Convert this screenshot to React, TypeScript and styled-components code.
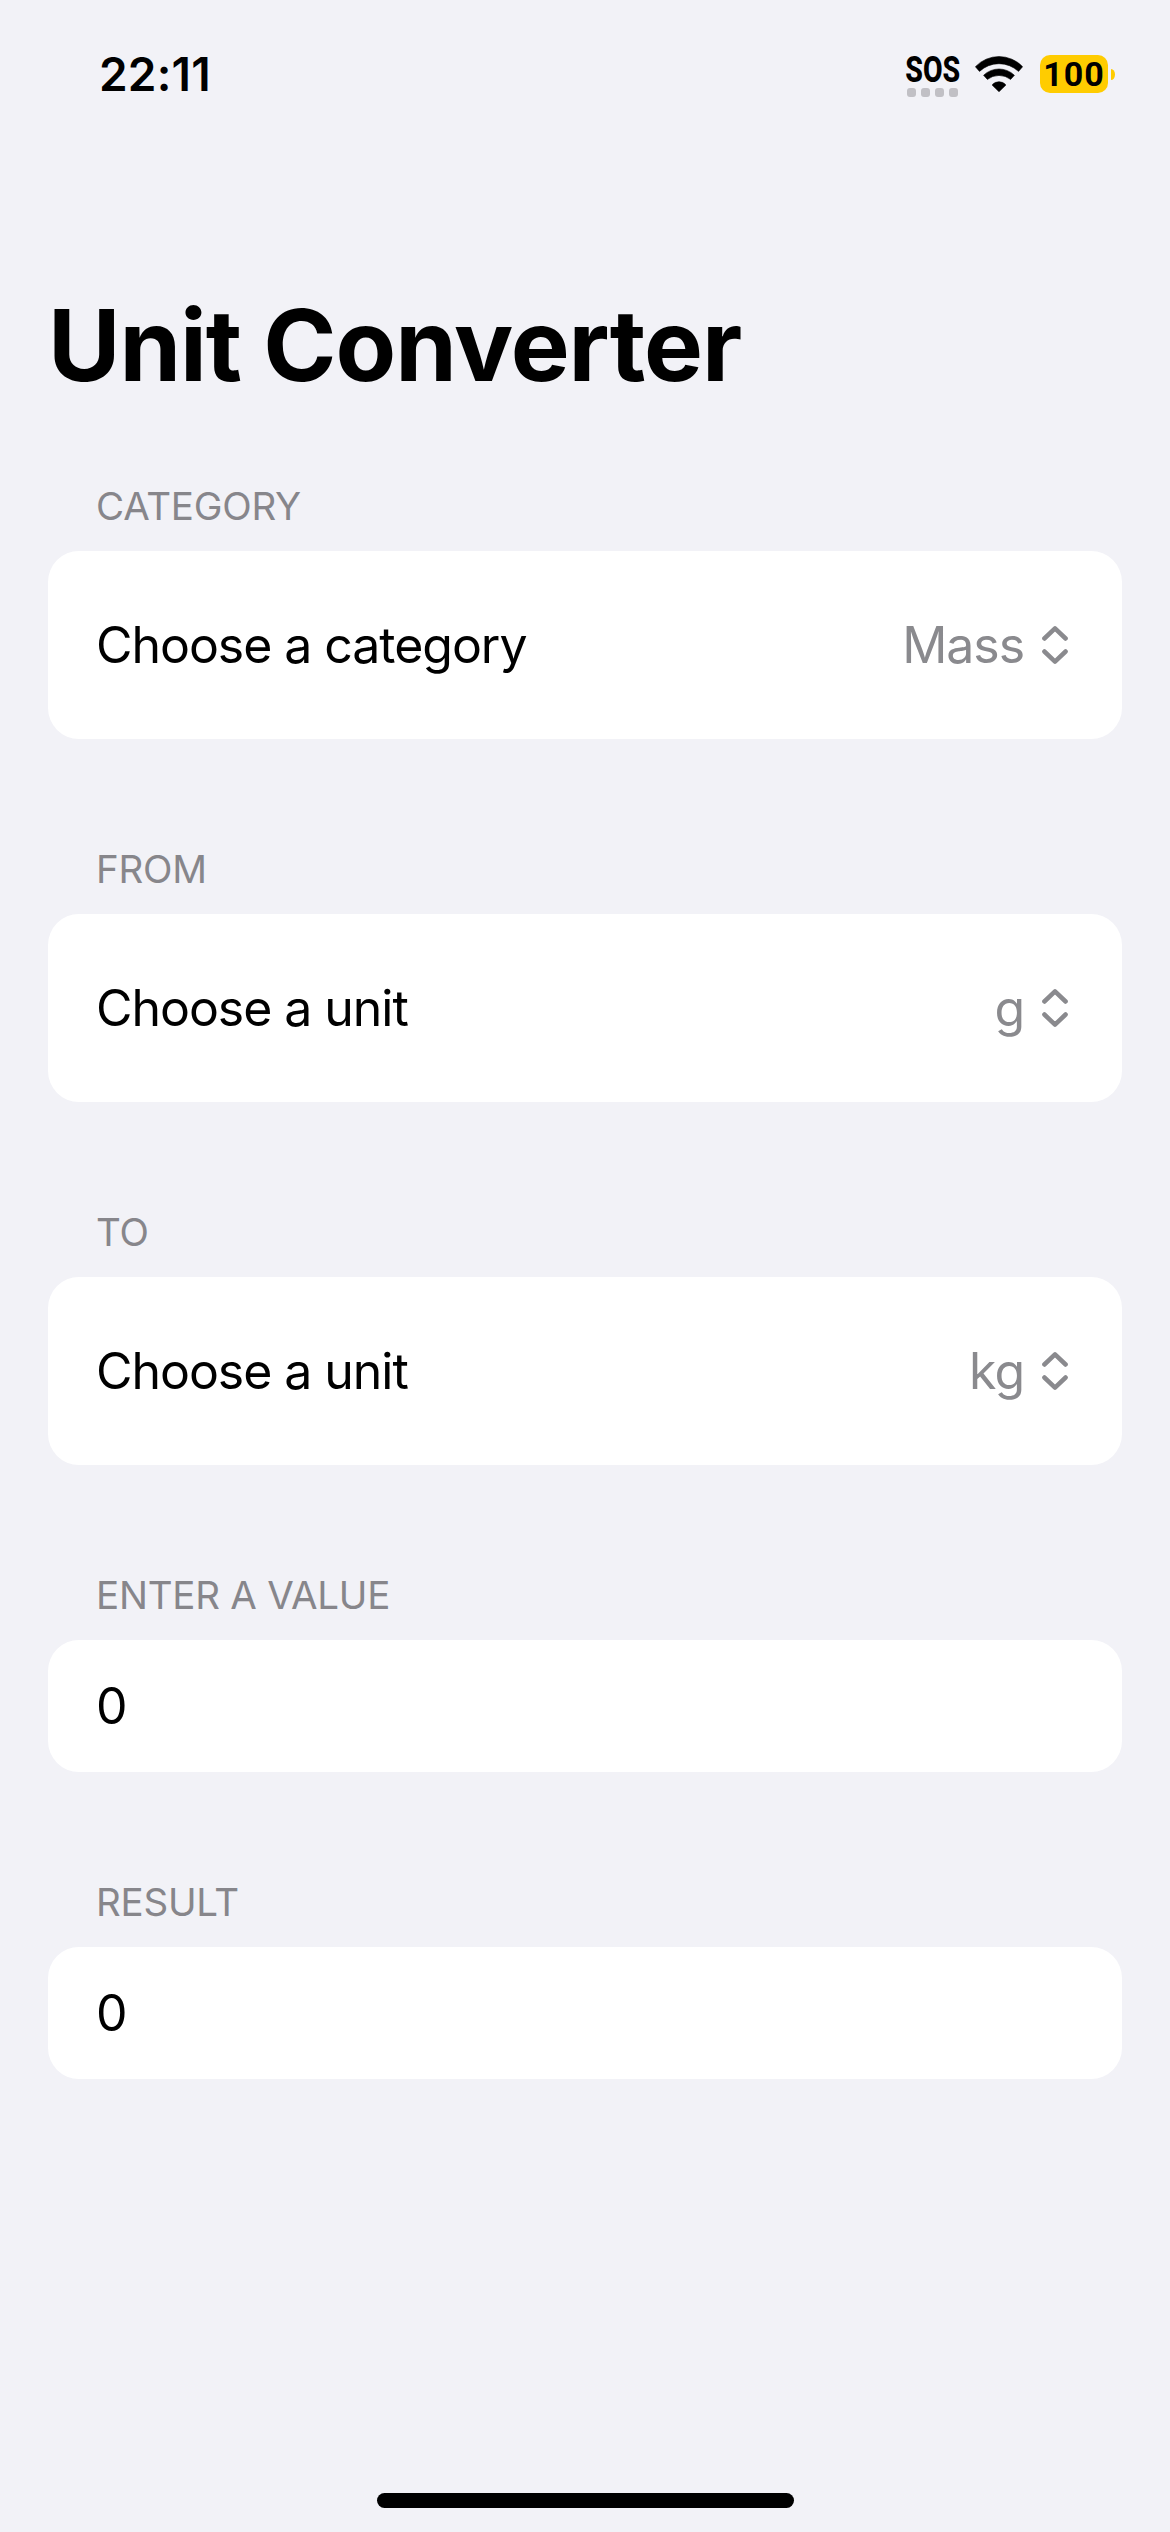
import React from "react";
import styled, { createGlobalStyle } from "styled-components";

const GlobalStyle = createGlobalStyle`
  *, *::before, *::after { box-sizing: border-box; }
  body { margin: 0; background: #f2f2f7; }
`;

const Screen = styled.div`
  width: 1170px;
  height: 2532px;
  display: flex;
  flex-direction: column;
  overflow: hidden;
  background: #f2f2f7;
  color: #000;
  font-family: Inter, "Liberation Sans", sans-serif;
`;

const StatusBar = styled.header`
  flex: none;
  display: flex;
  align-items: center;
  justify-content: space-between;
  height: 148px;
  padding: 0 55px 0 99px;
`;

const Clock = styled.time`
  font-size: 46px;
  line-height: 56px;
  font-weight: 600;
  letter-spacing: 0.2px;
`;

const Indicators = styled.div`
  display: flex;
  align-items: center;
`;

const Signal = styled.div`
  display: flex;
  flex-direction: column;
  align-items: center;
  width: 55px;
  height: 42px;
  margin: 5px 15px 0 0;
`;

const SosLabel = styled.span`
  font-family: Roboto, Inter, sans-serif;
  font-size: 37px;
  line-height: 28px;
  font-weight: 800;
  transform: scaleX(0.77);
`;

const SignalDots = styled.div`
  display: flex;
  gap: 5px;
  margin-top: 4px;
`;

const SignalDot = styled.i`
  width: 9px;
  height: 9px;
  border-radius: 3px;
  background: #c1c0c5;
`;

const Battery = styled.div`
  display: flex;
  align-items: center;
  gap: 3px;
  margin-left: 17px;
`;

const BatteryBody = styled.div`
  display: flex;
  align-items: center;
  justify-content: center;
  width: 68px;
  height: 38px;
  border-radius: 10px;
  background: #ffcc00;
  font-family: Roboto, Inter, sans-serif;
  font-size: 34px;
  line-height: 38px;
  font-weight: 700;
  letter-spacing: 1px;
`;

const BatteryCap = styled.div`
  width: 4px;
  height: 11px;
  border-radius: 0 4px 4px 0 / 0 5.5px 5.5px 0;
  background: #ffcc00;
`;

const Main = styled.main`
  flex: 1;
  padding: 137px 48px 0;
`;

const Title = styled.h1`
  margin: 0 0 77px;
  font-size: 99px;
  line-height: 120px;
  font-weight: 700;
  letter-spacing: -1.05px;
`;

const Form = styled.div`
  display: flex;
  flex-direction: column;
  gap: 106px;
`;

const SectionLabel = styled.h2`
  margin: 0 0 21px;
  padding-left: 48px;
  font-size: 38.5px;
  line-height: 48px;
  font-weight: 400;
  letter-spacing: -0.24px;
  color: #87868b;
  text-transform: uppercase;
`;

const Card = styled.div<{ $tall?: boolean }>`
  display: flex;
  align-items: center;
  justify-content: space-between;
  height: ${(p) => (p.$tall ? 188 : 132)}px;
  padding: 0 54px 0 48px;
  border-radius: 31px;
  background: #fff;
  font-size: 50px;
  line-height: 66px;
  letter-spacing: -1.05px;
`;

const Picker = styled.div`
  display: flex;
  align-items: center;
  gap: 18px;
  color: #8a8a8e;
`;

const HomeArea = styled.footer`
  flex: none;
  display: flex;
  justify-content: center;
  height: 39px;
`;

const HomeIndicator = styled.div`
  width: 417px;
  height: 15px;
  border-radius: 8px;
  background: #000;
`;

const Wifi = () => (
  <svg width="48" height="36" viewBox="0 0 48 36" stroke="#000" strokeWidth="0.6" strokeLinejoin="round">
    <path d="M.4 10.7A32.5 32.5 0 0 1 47.6 10.7L43.5 15.4A28.5 28.5 0 0 0 4.5 15.4Z" />
    <path d="M8.6 19.3A22 22 0 0 1 39.4 19.3L35.6 23.4A19 19 0 0 0 12.4 23.4Z" />
    <path d="M17.1 29A8.9 8.9 0 0 1 30.9 29L24 35.7Z" />
  </svg>
);

const Chevrons = () => (
  <svg width="26" height="38" viewBox="0 0 26 38" fill="none" stroke="#8a8a8e" strokeWidth="4.5" strokeLinecap="round" strokeLinejoin="round">
    <path d="M2.4 12.5 13 2.4 23.6 12.5M2.4 25.5 13 35.6 23.6 25.5" />
  </svg>
);

type Field = { label: string; text: string; choice?: string };

const fields: Field[] = [
  { label: "Category", text: "Choose a category", choice: "Mass" },
  { label: "From", text: "Choose a unit", choice: "g" },
  { label: "To", text: "Choose a unit", choice: "kg" },
  { label: "Enter a value", text: "0" },
  { label: "Result", text: "0" },
];

export default function App() {
  return (
    <Screen>
      <GlobalStyle />
      <StatusBar>
        <Clock>22:11</Clock>
        <Indicators>
          <Signal>
            <SosLabel>SOS</SosLabel>
            <SignalDots>
              <SignalDot />
              <SignalDot />
              <SignalDot />
              <SignalDot />
            </SignalDots>
          </Signal>
          <Wifi />
          <Battery>
            <BatteryBody>100</BatteryBody>
            <BatteryCap />
          </Battery>
        </Indicators>
      </StatusBar>
      <Main>
        <Title>Unit Converter</Title>
        <Form>
          {fields.map((field) => (
            <section key={field.label}>
              <SectionLabel>{field.label}</SectionLabel>
              <Card $tall={field.choice !== undefined}>
                <span>{field.text}</span>
                {field.choice && (
                  <Picker>
                    <span>{field.choice}</span>
                    <Chevrons />
                  </Picker>
                )}
              </Card>
            </section>
          ))}
        </Form>
      </Main>
      <HomeArea>
        <HomeIndicator />
      </HomeArea>
    </Screen>
  );
}
